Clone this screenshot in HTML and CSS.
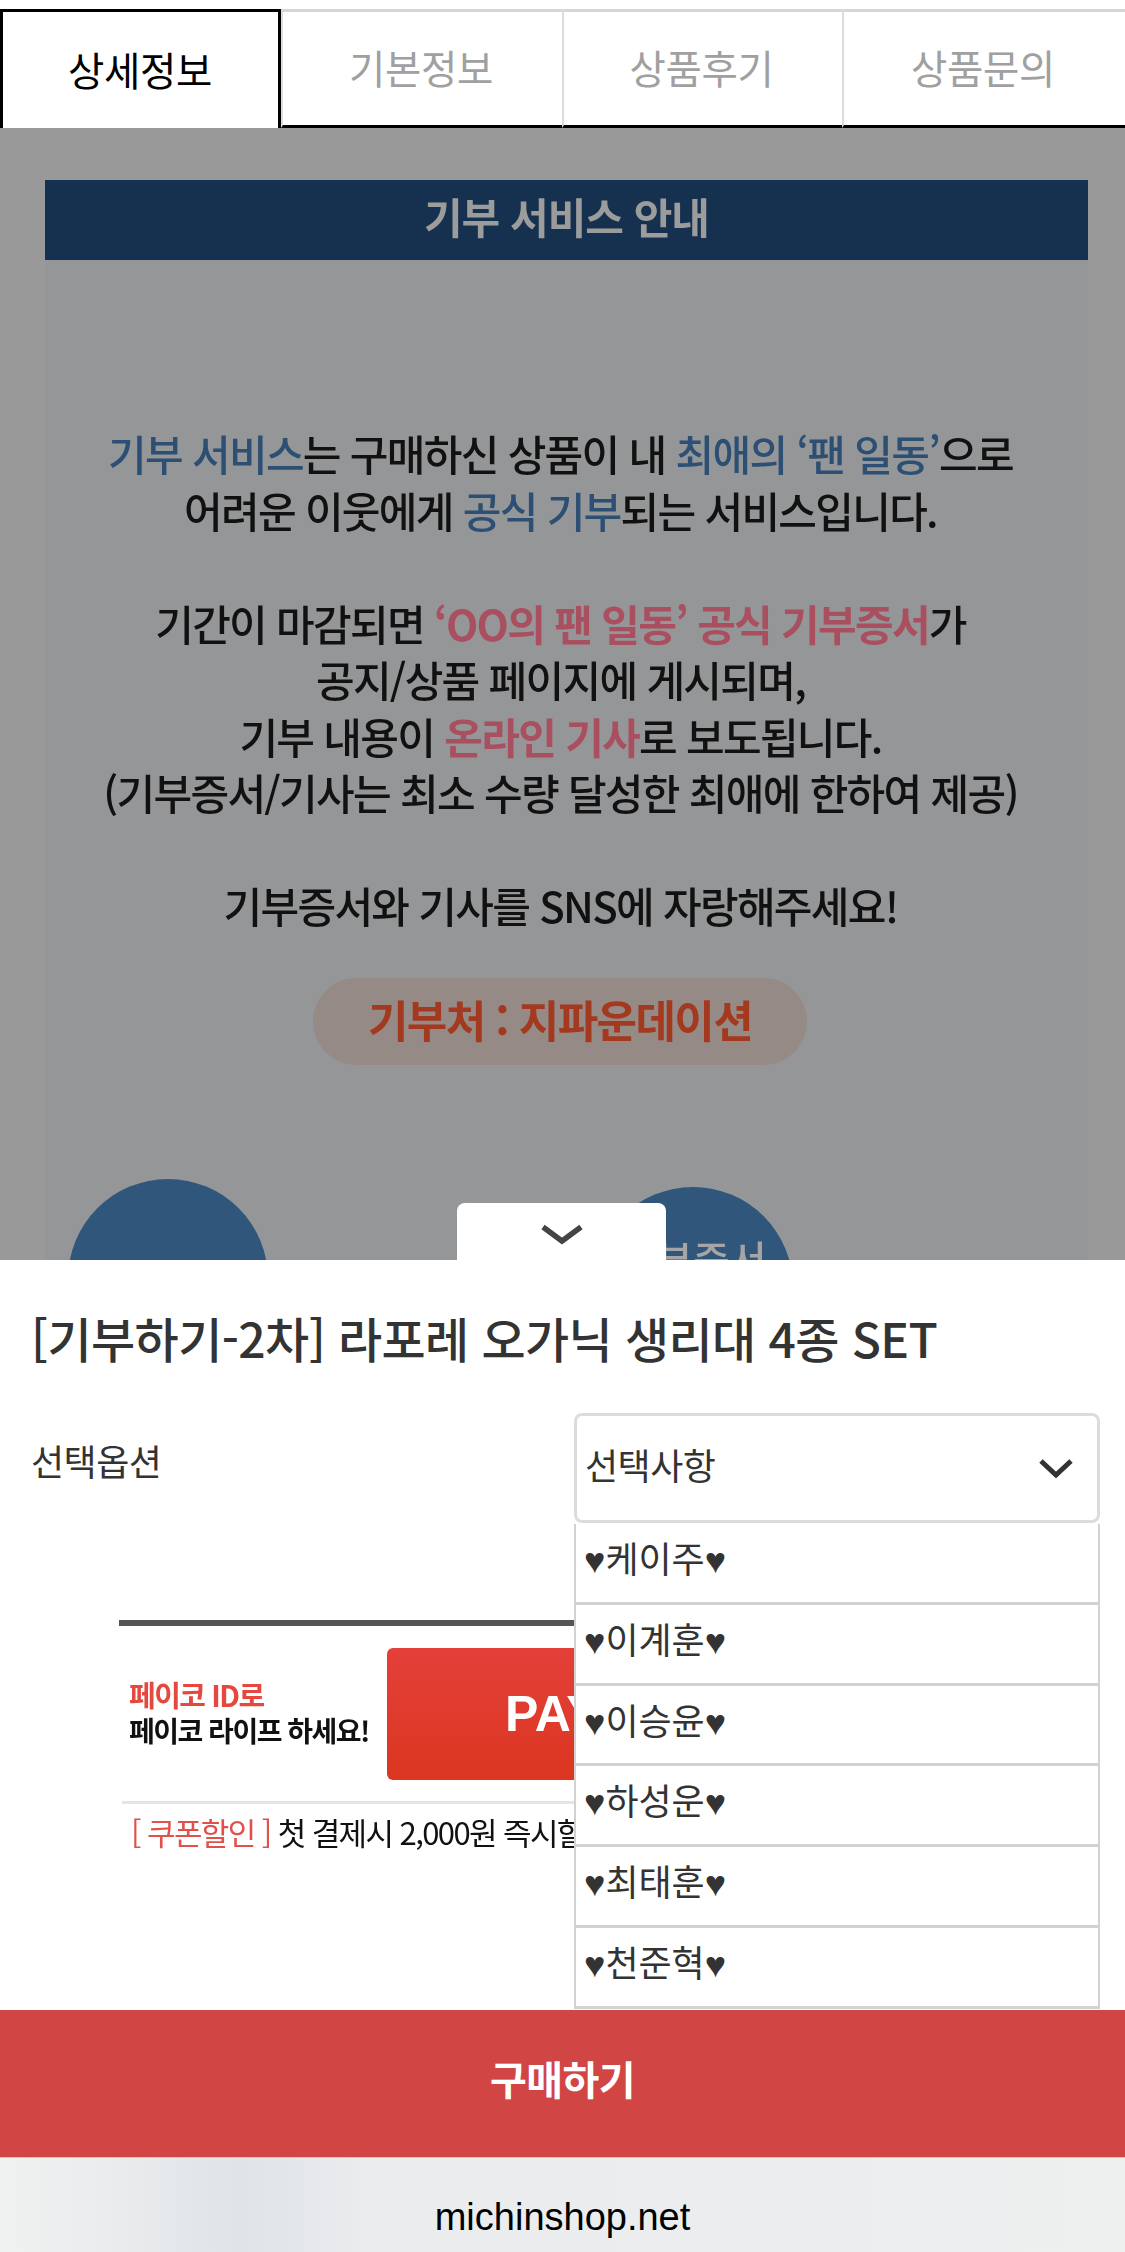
FILE: index.html
```html
<!DOCTYPE html>
<html lang="ko">
<head>
<meta charset="utf-8">
<title>상세정보</title>
<link rel="stylesheet" href="styles.css">
</head>
<body>
<div class="page">
  <nav class="tabs">
    <a class="tab active">상세정보</a>
    <a class="tab">기본정보</a>
    <a class="tab">상품후기</a>
    <a class="tab">상품문의</a>
  </nav>
  <main class="backdrop">
    <div class="panel">
      <h2 class="banner">기부 서비스 안내</h2>
      <div class="copy">
        <p><span class="blue">기부 서비스</span>는 구매하신 상품이 내 <span class="blue">최애의 ‘팬 일동’</span>으로<br>어려운 이웃에게 <span class="blue">공식 기부</span>되는 서비스입니다.</p>
        <p>기간이 마감되면 <span class="red">‘OO의 팬 일동’ 공식 기부증서</span>가<br>공지/상품 페이지에 게시되며,<br>기부 내용이 <span class="red">온라인 기사</span>로 보도됩니다.<br>(기부증서/기사는 최소 수량 달성한 최애에 한하여 제공)</p>
        <p>기부증서와 기사를 SNS에 자랑해주세요!</p>
      </div>
      <div class="pill">기부처 : 지파운데이션</div>
      <div class="circles">
        <div class="circle first">상품 구매</div>
        <div class="circle second">기부증서</div>
      </div>
    </div>
  </main>
  <section class="sheet">
    <button class="handle" aria-label="닫기">
      <svg class="handle-icon" viewBox="0 0 46 22"><path d="M4 3 L23 17 L42 3"/></svg>
    </button>
    <h1 class="title">[기부하기-2차] 라포레 오가닉 생리대 4종 SET</h1>
    <div class="option-row">
      <span class="option-label">선택옵션</span>
      <div class="select-wrap">
        <div class="select">
          <span>선택사항</span>
          <svg class="select-icon" viewBox="0 0 36 20"><path d="M3 3 L18 17 L33 3"/></svg>
        </div>
        <ul class="dropdown">
          <li>♥케이주♥</li>
          <li>♥이계훈♥</li>
          <li>♥이승윤♥</li>
          <li>♥하성운♥</li>
          <li>♥최태훈♥</li>
          <li>♥천준혁♥</li>
        </ul>
      </div>
    </div>
    <div class="payco">
      <div class="payco-main">
        <div class="payco-text">
          <strong class="payco-red">페이코 ID로</strong>
          <strong>페이코 라이프 하세요!</strong>
        </div>
        <div class="payco-btn">PAYCO</div>
      </div>
      <p class="coupon"><span class="coupon-red">[ 쿠폰할인 ]</span> 첫 결제시 2,000원 즉시할인</p>
    </div>
    <button class="buy">구매하기</button>
    <footer class="urlbar">michinshop.net</footer>
  </section>
</div>
</body>
</html>
```
FILE: styles.css
```css
* { box-sizing: border-box; }
html, body { margin: 0; padding: 0; }
body {
  width: 1125px;
  height: 2252px;
  overflow: hidden;
  background: #fff;
  font-family: "Noto Sans CJK KR", "Noto Sans", sans-serif;
}
.page {
  position: relative;
  width: 1125px;
  height: 2252px;
  overflow: hidden;
  display: flex;
  flex-direction: column;
}
.tabs {
  display: grid;
  grid-template-columns: 281px 281px 280px 283px;
  height: 119px;
  margin-top: 9px;
  flex: none;
}
.tab {
  display: flex;
  align-items: center;
  justify-content: center;
  padding: 0 3px 4px 0;
  font-size: 39.5px;
  letter-spacing: -0.4px;
  color: #a0a0a0;
  background: #fff;
  border-top: 3px solid #d6d6d6;
  border-left: 2px solid #dcdcdc;
  border-bottom: 3px solid #000;
}
.tab.active {
  color: #000;
  padding: 0 1px 3px 0;
  border: 3px solid #000;
  border-bottom: 0;
}
.backdrop {
  flex: 1;
  background: #999;
  padding: 52px 37px 0 45px;
  overflow: hidden;
}
.panel {
  background: #959697;
  height: 1400px;
  filter: blur(0.5px);
}
.banner {
  margin: 0;
  height: 80px;
  background: #16314f;
  color: #9c9c9c;
  font-size: 42px;
  font-weight: 700;
  letter-spacing: -1px;
  line-height: 72px;
  text-align: center;
}
.copy {
  padding: 165px 12px 0 0;
  font-size: 42px;
  font-weight: 500;
  letter-spacing: -1.7px;
  line-height: 56.5px;
  text-align: center;
  color: #111;
}
.copy p { margin: 0 0 56.5px; }
.blue { color: #2c4f73; }
.red { color: #a94f5f; font-weight: 700; }
.pill {
  width: 494px;
  height: 87px;
  margin: -12px 0 0 268px;
  border-radius: 44px;
  background: #968a86;
  color: #a33a20;
  font-size: 44px;
  font-weight: 700;
  letter-spacing: -1.6px;
  line-height: 82px;
  text-align: center;
}
.circles {
  display: flex;
  align-items: flex-start;
  padding: 114px 0 0 23px;
}
.circle {
  width: 200px;
  height: 200px;
  flex: none;
  border-radius: 50%;
  background: #30577b;
  color: #a5a5a5;
  font-size: 40px;
  line-height: 58px;
  font-weight: 500;
  text-align: center;
  white-space: nowrap;
}
.circle.first { padding: 72px 0 0 22px; }
.circle.second { margin: 8px 0 0 325px; padding-top: 42px; }
.sheet {
  position: absolute;
  left: 0;
  right: 0;
  bottom: 0;
  height: 992px;
  background: #fff;
  display: flex;
  flex-direction: column;
}
.handle {
  position: absolute;
  left: 457px;
  top: -57px;
  width: 209px;
  height: 57px;
  border: 0;
  border-radius: 8px 8px 0 0;
  background: #fff;
  display: flex;
  justify-content: center;
  padding: 21px 0 0;
}
.handle-icon { width: 46px; height: 22px; }
.handle-icon path {
  fill: none;
  stroke: #444;
  stroke-width: 5.5;
}
.title {
  margin: 47px 0 0;
  padding-left: 31px;
  font-size: 48px;
  font-weight: 500;
  line-height: 60px;
  letter-spacing: -0.6px;
  color: #333;
}
.option-row {
  display: flex;
  justify-content: space-between;
  align-items: flex-start;
  height: 207px;
  margin-top: 46px;
  padding: 0 25px 0 31px;
  flex: none;
}
.option-label {
  font-size: 36px;
  line-height: 50px;
  letter-spacing: -0.5px;
  margin-top: 22px;
  color: #333;
}
.select-wrap {
  position: relative;
  width: 526px;
}
.select {
  height: 110px;
  border: 3px solid #dcdcdc;
  border-radius: 8px;
  background: #fff;
  display: flex;
  align-items: center;
  justify-content: space-between;
  padding: 0 23px 8px 8px;
  font-size: 36px;
  letter-spacing: -0.5px;
  color: #333;
}
.select-icon { width: 36px; height: 20px; margin-top: 8px; }
.select-icon path {
  fill: none;
  stroke: #333;
  stroke-width: 5;
}
.dropdown {
  position: absolute;
  left: 0;
  right: 0;
  top: calc(100% + 1px);
  z-index: 2;
  margin: 0;
  padding: 0;
  list-style: none;
  background: #fff;
  border-left: 2px solid #d2d2d2;
  border-right: 2px solid #d2d2d2;
}
.dropdown li {
  height: 80.8px;
  border-bottom: 3px solid #d2d2d2;
  padding: 12px 0 0 8px;
  font-family: "Liberation Sans", "Noto Sans CJK KR", sans-serif;
  font-size: 36px;
  line-height: 50px;
  color: #333;
}
.payco {
  margin: 0 119px;
  border-top: 6px solid #555;
  flex: none;
  filter: blur(0.3px);
}
.payco-main {
  display: flex;
  align-items: center;
  height: 178px;
  padding: 0 0 0 7px;
  margin: 0 0 0 3px;
  border-bottom: 3px solid #e4e4e4;
  gap: 21px;
}
.payco-text {
  display: flex;
  flex-direction: column;
  gap: 2px;
  font-size: 28px;
  line-height: 34px;
  letter-spacing: -1.5px;
  color: #111;
  margin-top: -3px;
  width: 237px;
  white-space: nowrap;
}
.payco-red { color: #e4483f; font-size: 29px; }
.payco-btn {
  width: 600px;
  height: 132px;
  border-radius: 6px;
  background: linear-gradient(#e4403a, #db3620);
  color: #fff;
  font-family: "Liberation Sans", Arial, sans-serif;
  font-size: 50px;
  font-weight: 700;
  line-height: 132px;
  padding-left: 118px;
}
.coupon {
  margin: 0;
  padding: 7px 0 0 12px;
  font-size: 31px;
  line-height: 42px;
  letter-spacing: -1.6px;
  color: #111;
  white-space: nowrap;
}
.coupon-red { color: #e2504a; }
.buy {
  display: block;
  width: 100%;
  height: 147px;
  margin-top: auto;
  padding: 0 0 12px;
  border: 0;
  background: #d24545;
  color: #fff;
  font-family: inherit;
  font-size: 40px;
  font-weight: 700;
  letter-spacing: -0.5px;
  flex: none;
}
.urlbar {
  height: 95px;
  flex: none;
  border-top: 1px solid #e6bcbc;
  background: linear-gradient(90deg, #f0f1f1 0, #ebedee 90px, #e0e4e7 240px, #eaecee 370px, #ecedef 800px, #eef0f0 1125px);
  font-family: "Liberation Sans", Arial, sans-serif;
  font-size: 38px;
  line-height: 118px;
  text-align: center;
  color: #000;
}
```
